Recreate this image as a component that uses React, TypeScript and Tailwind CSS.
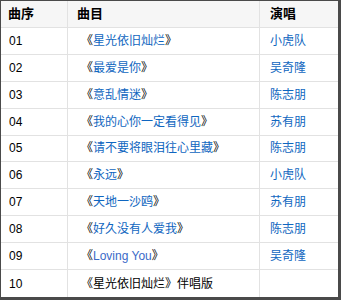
import React from "react";

const rows: [string, string, string, boolean][] = [
  ["01", "星光依旧灿烂", "小虎队", true],
  ["02", "最爱是你", "吴奇隆", true],
  ["03", "意乱情迷", "陈志朋", true],
  ["04", "我的心你一定看得见", "苏有朋", true],
  ["05", "请不要将眼泪往心里藏", "陈志朋", true],
  ["06", "永远", "小虎队", true],
  ["07", "天地一沙鸥", "苏有朋", true],
  ["08", "好久没有人爱我", "陈志朋", true],
  ["09", "Loving You", "吴奇隆", true],
  ["10", "", "", false],
];

const font = { fontFamily: '"Liberation Sans", Arial, "Noto Sans CJK SC", sans-serif' };

export default function App() {
  return (
    <div
      className="w-[341px] h-[300px] bg-white border-t border-l border-r-[3px] border-b-[3px] border-[#4a4a4a] flex flex-col text-[12px] text-black"
      style={font}
    >
      <div className="flex h-[27px] bg-[#f6f6f6] border-b border-[#e2e2e2] font-bold text-[13px] items-center">
        <div className="w-[67px] h-full border-r border-[#e2e2e2] pl-[7px] flex items-center">曲序</div>
        <div className="w-[192px] h-full border-r border-[#e2e2e2] pl-[9px] flex items-center">曲目</div>
        <div className="flex-1 h-full pl-[10px] flex items-center">演唱</div>
      </div>
      {rows.map(([n, title, singer, normal], i) => (
        <div
          key={n}
          className={`flex h-[27px] items-center ${i < rows.length - 1 ? "border-b border-[#e2e2e2]" : ""}`}
        >
          <div className="w-[67px] h-full border-r border-[#e2e2e2] pl-[8px] flex items-center">{n}</div>
          <div className="w-[192px] h-full border-r border-[#e2e2e2] pl-[13px] flex items-center whitespace-nowrap">
            {normal ? (
              <>
                <span className="text-black">《</span>
                <span className={title === "Loving You" ? "text-[#3a6ac8]" : "text-[#0f66c0]"}>{title}</span>
                <span className="text-black">》</span>
              </>
            ) : (
              <span>《星光依旧灿烂》伴唱版</span>
            )}
          </div>
          <div className="flex-1 h-full pl-[10px] flex items-center text-[#0f66c0]">{singer}</div>
        </div>
      ))}
    </div>
  );
}
